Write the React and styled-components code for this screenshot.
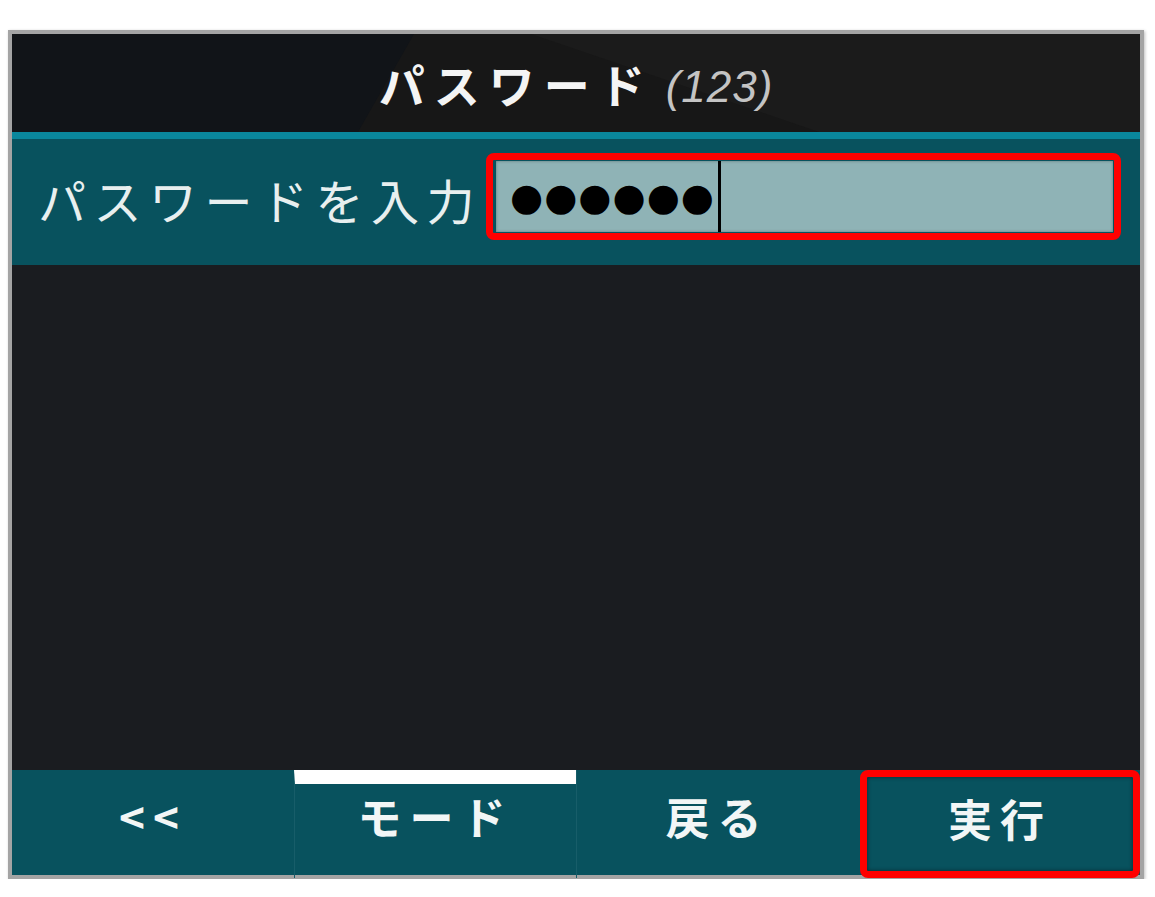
import styled, { createGlobalStyle } from "styled-components"

const GlobalStyle = createGlobalStyle`
  body {
    margin: 0;
    background: #ffffff;
    font-family: "Noto Sans CJK JP", "Noto Sans", sans-serif;
  }
`

const Frame = styled.div`
  width: 1128px;
  margin: 30px 0 0 8px;
  border: 4px solid #a4a4a4;
  box-shadow: 1px 1px 3px rgba(0, 0, 0, 0.25);
  display: flex;
  flex-direction: column;
  background: #1a1c20;
`

const Header = styled.div`
  height: 98px;
  position: relative;
  background: #171717;
  display: flex;
  align-items: center;
  justify-content: center;
  gap: 12px;
  border-bottom: 7px solid #0a879c;

  &::before,
  &::after {
    content: "";
    position: absolute;
    inset: 0;
  }
  &::before {
    background: #111418;
    clip-path: polygon(0 0, 402px 0, 346px 100%, 0 100%);
  }
  &::after {
    background: #1b1b1b;
    clip-path: polygon(519px 0, 100% 0, 100% 100%, 807px 100%);
  }
`

const Title = styled.span`
  position: relative;
  z-index: 1;
  font-size: 46px;
  font-weight: 700;
  letter-spacing: 9px;
  color: #f4f4f4;
  line-height: 1;
`

const Hint = styled.span`
  position: relative;
  z-index: 1;
  font-family: "Liberation Sans", sans-serif;
  font-style: italic;
  font-size: 44px;
  letter-spacing: 1px;
  color: #c4c4c4;
  line-height: 1;
  margin-top: 8px;
`

const Row = styled.div`
  height: 126px;
  box-sizing: border-box;
  background: #08525e;
  display: flex;
  align-items: center;
  padding: 12px 19px 23px 26px;
`

const Label = styled.span`
  flex: none;
  font-size: 48px;
  letter-spacing: 7.5px;
  color: #e8efef;
  line-height: 1;
  margin-top: 4px;
`

const Highlight = styled.div`
  flex: 1;
  height: 87px;
  box-sizing: border-box;
  margin-left: 4px;
  border: ${(p) => (p.$on ? "7px solid #ff0000" : "none")};
  border-radius: 8px;
  padding: 1px 1px 1px 3px;
  display: flex;
`

const Field = styled.div`
  flex: 1;
  background: #8fb3b6;
  box-shadow: inset 0 0 3px rgba(0, 0, 0, 0.35);
  display: flex;
  align-items: center;
  padding-left: 14px;
`

const Dots = styled.span`
  font-family: "DejaVu Sans", sans-serif;
  font-size: 38px;
  letter-spacing: 1px;
  color: #000000;
  line-height: 1;
`

const Caret = styled.span`
  align-self: stretch;
  width: 3px;
  margin-left: 3px;
  background: #000000;
`

const Body = styled.div`
  height: 505px;
  background: #1a1c20;
`

const Bar = styled.div`
  height: 105px;
  display: grid;
  grid-template-columns: repeat(4, 1fr);
  background: #08525e;
`

const Key = styled.div`
  position: relative;
  box-sizing: border-box;
  display: flex;
  align-items: center;
  justify-content: center;
  padding-bottom: 30px;
  font-size: 44px;
  font-weight: 700;
  letter-spacing: 8px;
  color: #f2f6f6;
  border-left: ${(p) => (p.$first ? "none" : "1px solid #175d69")};
  border-top: ${(p) => (p.$active ? "14px solid #ffffff" : "none")};
  padding-top: ${(p) => (p.$active ? "0" : "14px")};
  ${(p) =>
    p.$marked &&
    `
    border: 7px solid #ff0000;
    border-radius: 8px;
    margin-left: 2px;
    box-shadow: inset 0 0 4px rgba(0, 0, 0, 0.5);
    padding-top: 0;
    padding-bottom: 12px;
  `}
`

const keys = [
  { label: "<<" },
  { label: "モード", active: true },
  { label: "戻る" },
  { label: "実行", marked: true },
]

const App = () => {
  return (
    <>
      <GlobalStyle />
      <Frame>
        <Header>
          <Title>パスワード</Title>
          <Hint>(123)</Hint>
        </Header>
        <Row>
          <Label>パスワードを入力</Label>
          <Highlight $on>
            <Field>
              <Dots>●●●●●●</Dots>
              <Caret />
            </Field>
          </Highlight>
        </Row>
        <Body />
        <Bar>
          {keys.map((k, i) => (
            <Key key={k.label} $first={i === 0} $active={k.active} $marked={k.marked}>
              {k.label}
            </Key>
          ))}
        </Bar>
      </Frame>
    </>
  )
}

export default App
